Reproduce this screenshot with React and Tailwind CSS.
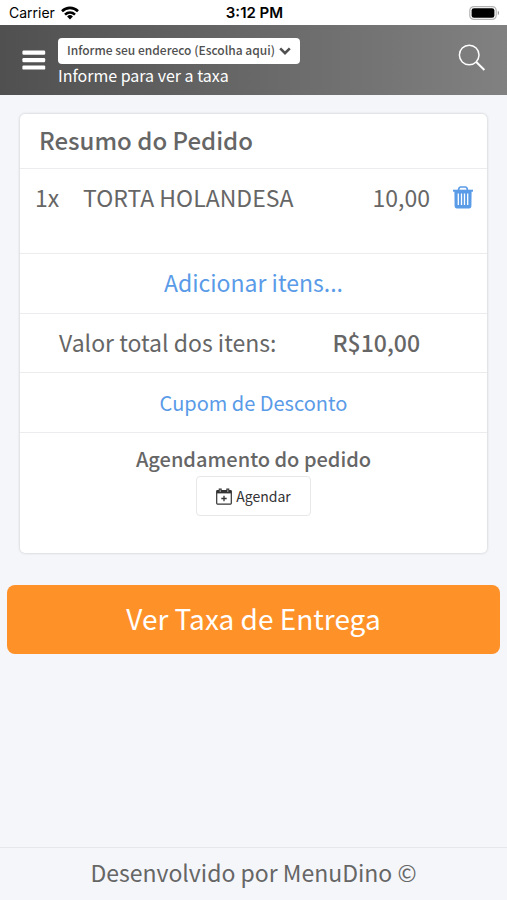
const ORDER_ITEMS = [{ id: 1, qty: 1, name: "TORTA HOLANDESA", price: "10,00" }];

function WifiIcon() {
  return (
    <svg width="18" height="14" viewBox="0 0 18 14" fill="none" stroke="#000" strokeWidth="2.6" aria-hidden="true">
      <path d="M1 5.2C5.6.8 12.4.8 17 5.2" />
      <path d="M4 8.6c2.9-2.7 7.1-2.7 10 0" />
      <path d="M9 13.4l-2.9-2.9a4.2 4.2 0 0 1 5.8 0z" fill="#000" stroke="none" />
    </svg>
  );
}

function BatteryIcon() {
  return (
    <svg width="31" height="14" viewBox="0 0 31 14" aria-hidden="true">
      <rect x=".8" y=".6" width="26.4" height="12.8" rx="4" fill="#fff" stroke="#b4b4b4" strokeWidth="1.2" />
      <rect x="2.6" y="2.2" width="22.8" height="9.6" rx="2.4" fill="#000" />
      <path d="M28.8 4.8c1.6.5 1.6 3.9 0 4.4z" fill="#999" />
    </svg>
  );
}

function MenuIcon() {
  return (
    <svg width="24" height="20" viewBox="0 0 24 20" fill="currentColor" aria-hidden="true">
      <rect x=".4" y=".6" width="22.8" height="4.2" rx="1.2" />
      <rect x=".4" y="8" width="22.8" height="4.2" rx="1.2" />
      <rect x=".4" y="15.4" width="22.8" height="4.2" rx="1.2" />
    </svg>
  );
}

function ChevronIcon() {
  return (
    <svg width="12" height="10" viewBox="0 0 12 10" fill="none" stroke="currentColor" strokeWidth="2.6" aria-hidden="true">
      <path d="M1.2 2.4L6 7.2l4.8-4.8" />
    </svg>
  );
}

function SearchIcon() {
  return (
    <svg width="28" height="28" viewBox="0 0 28 28" fill="none" stroke="#fff" strokeWidth="1.5" aria-hidden="true">
      <circle cx="11.2" cy="11" r="9.8" />
      <path d="M18 17.8l8.4 8.2" strokeWidth="2" />
    </svg>
  );
}

function TrashIcon() {
  return (
    <svg width="20" height="23" viewBox="0 0 20 23" fill="none" stroke="currentColor" aria-hidden="true">
      <path d="M5.4 4.4l.7-2.3c.2-.7.7-1.1 1.4-1.1h5c.7 0 1.2.4 1.4 1.1l.7 2.3" strokeWidth="1.7" />
      <path d="M0 4.7h20" strokeWidth="2" />
      <path d="M1.4 5h17.2l-.2 15c0 1.5-.9 2.4-2.3 2.4H3.9c-1.4 0-2.3-.9-2.3-2.4z" fill="currentColor" stroke="none" />
      <path d="M5.3 7.6v11.4M8.5 7.6v11.4M11.5 7.6v11.4M14.7 7.6v11.4" stroke="#fff" strokeWidth="1.3" />
    </svg>
  );
}

function CalendarPlusIcon() {
  return (
    <svg width="16" height="17" viewBox="0 0 16 17" fill="none" stroke="currentColor" aria-hidden="true">
      <rect x=".7" y="2.7" width="14.6" height="13.4" rx=".8" strokeWidth="1.2" />
      <path d="M.7 2.6h14.6v2.8H.7z" fill="currentColor" stroke="none" />
      <path d="M4.2.5v4M11.8.5v4" strokeWidth="3" />
      <path d="M4.2 1.6v2.4M11.8 1.6v2.4" stroke="#fff" strokeWidth=".6" />
      <path d="M8 7.8v5.4M5.3 10.5h5.4" strokeWidth="1.3" />
    </svg>
  );
}

function StatusBar() {
  return (
    <div className="grid grid-cols-3 items-center h-[25px] pt-px pl-[9px] pr-[7px] bg-white text-black leading-5 font-['Inter',sans-serif]">
      <div className="flex items-center gap-[6px]">
        <span className="text-[14px]">Carrier</span>
        <WifiIcon />
      </div>
      <span className="text-center text-[15px] font-semibold">3:12 PM</span>
      <div className="flex justify-end">
        <BatteryIcon />
      </div>
    </div>
  );
}

function Header() {
  return (
    <header className="flex items-start h-[70px] pl-[22px] pr-[21px] pt-[13px] bg-linear-to-r from-[#505050] to-[#818181] text-white">
      <button type="button" aria-label="Menu" className="mt-3 w-9">
        <MenuIcon />
      </button>
      <div className="flex flex-col items-start grow">
        <button
          type="button"
          className="flex items-center gap-1 h-[26px] px-[9px] rounded bg-white text-[#505050] text-[12px] font-medium whitespace-nowrap"
        >
          <span className="pb-0.5">Informe seu endereco (Escolha aqui)</span>
          <ChevronIcon />
        </button>
        <span className="text-[16px] leading-[23px]">Informe para ver a taxa</span>
      </div>
      <button type="button" aria-label="Buscar" className="mt-[6px]">
        <SearchIcon />
      </button>
    </header>
  );
}

function OrderSummary() {
  return (
    <section className="mx-5 mt-[19px] rounded-[5px] bg-white shadow-[0_0_3px_rgba(0,0,0,0.2)] divide-y divide-[#ececee]">
      <h1 className="h-[55px] pl-[19px] text-[24px] leading-[52px] font-medium">Resumo do Pedido</h1>
      <ul className="h-[85px] pt-[11px]">
        {ORDER_ITEMS.map((item) => (
          <li key={item.id} className="flex items-center pl-[15px] pr-[14px] text-[23px] leading-[34px]">
            <span className="w-12">{item.qty}x</span>
            <span className="grow">{item.name}</span>
            <span>{item.price}</span>
            <button type="button" aria-label="Remover" className="ml-[23px] text-[#5a9be8]">
              <TrashIcon />
            </button>
          </li>
        ))}
      </ul>
      <div className="flex items-center justify-center h-[60px] pb-0.5 text-[23px]">
        <a href="#itens" className="text-[#5a9be8]">
          Adicionar itens...
        </a>
      </div>
      <div className="flex items-center h-[59px] px-[39px] pb-0.5 text-[23px]">
        <span className="grow">Valor total dos itens:</span>
        <span className="font-medium mr-7">R$10,00</span>
      </div>
      <div className="flex items-center justify-center h-[60px] text-[20px]">
        <a href="#cupom" className="text-[#5a9be8]">
          Cupom de Desconto
        </a>
      </div>
      <div className="flex flex-col items-center h-[120px] pt-[11px]">
        <h2 className="mb-0.5 text-[20px] leading-[30px] font-medium">Agendamento do pedido</h2>
        <button
          type="button"
          className="flex items-center gap-1 h-10 px-[19px] rounded border border-[#e8e8e8] text-[14px] text-[#333]"
        >
          <CalendarPlusIcon />
          Agendar
        </button>
      </div>
    </section>
  );
}

export default function App() {
  return (
    <div className="flex flex-col min-h-screen bg-[#f5f6fa] text-[#666] font-['Noto_Sans_CJK_SC','Noto_Sans',sans-serif]">
      <StatusBar />
      <Header />
      <main className="grow">
        <OrderSummary />
        <div className="px-[7px] mt-8">
          <button type="button" className="w-full h-[69px] pb-1 rounded-lg bg-[#ff9129] text-white text-[28px]">
            Ver Taxa de Entrega
          </button>
        </div>
      </main>
      <footer className="h-[53px] border-t border-[#e6e7eb] text-center text-[23px] leading-[48px]">
        Desenvolvido por MenuDino ©
      </footer>
    </div>
  );
}
